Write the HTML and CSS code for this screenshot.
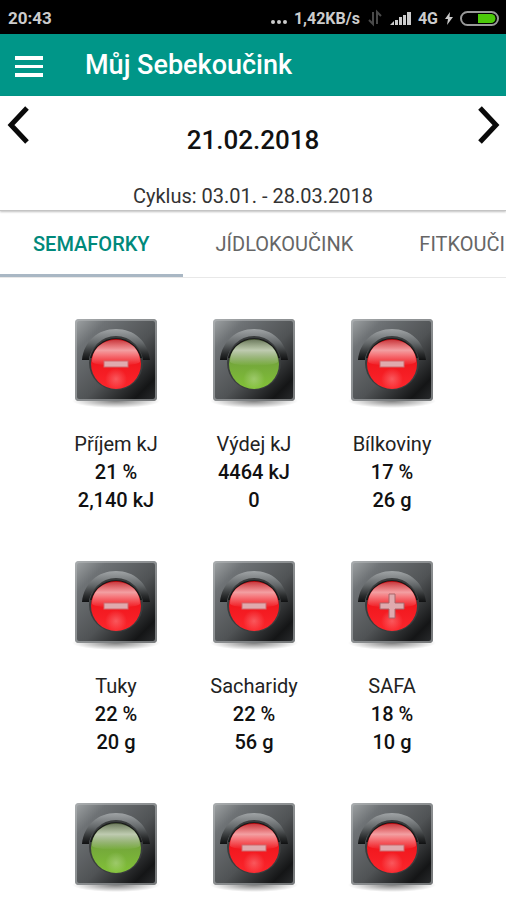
FILE: index.html
```
<!DOCTYPE html>
<html lang="cs">
<head>
  <meta charset="UTF-8">
  <meta name="viewport" content="width=device-width, initial-scale=1.0">
  <title>Můj Sebekoučink</title>
  <link rel="stylesheet" href="styles.css">
</head>
<body>
  <!-- shared lamp drawings -->
  <svg class="defs" width="0" height="0" aria-hidden="true">
    <defs>
      <linearGradient id="plate" x1="0" y1="0" x2="1" y2="1">
        <stop offset="0" stop-color="#a0a4a6"/>
        <stop offset="0.2" stop-color="#6e7275"/>
        <stop offset="0.55" stop-color="#505355"/>
        <stop offset="0.85" stop-color="#141516"/>
        <stop offset="1" stop-color="#2c2e30"/>
      </linearGradient>
      <linearGradient id="hood" x1="0" y1="0" x2="0" y2="1">
        <stop offset="0" stop-color="#a0a4a6"/>
        <stop offset="0.45" stop-color="#65696b"/>
        <stop offset="0.8" stop-color="#2a2c2d"/>
        <stop offset="1" stop-color="#101112"/>
      </linearGradient>
      <linearGradient id="red" x1="0" y1="0" x2="0" y2="1">
        <stop offset="0" stop-color="#b8090e"/>
        <stop offset="0.3" stop-color="#ee1219"/>
        <stop offset="1" stop-color="#fb262c"/>
      </linearGradient>
      <linearGradient id="green" x1="0" y1="0" x2="0" y2="1">
        <stop offset="0" stop-color="#4c5a3c"/>
        <stop offset="0.5" stop-color="#74a83a"/>
        <stop offset="1" stop-color="#82c138"/>
      </linearGradient>
      <linearGradient id="shine" x1="0" y1="0" x2="0" y2="1">
        <stop offset="0" stop-color="#fff" stop-opacity="0.2"/>
        <stop offset="0.4" stop-color="#fff" stop-opacity="0.6"/>
        <stop offset="1" stop-color="#fff" stop-opacity="0"/>
      </linearGradient>
      <radialGradient id="glow">
        <stop offset="0" stop-color="#fff" stop-opacity="0.25"/>
        <stop offset="1" stop-color="#fff" stop-opacity="0"/>
      </radialGradient>
      <radialGradient id="shadow">
        <stop offset="0" stop-color="#000" stop-opacity="0.5"/>
        <stop offset="1" stop-color="#000" stop-opacity="0"/>
      </radialGradient>
      <g id="housing">
        <ellipse cx="48" cy="89" rx="44" ry="7" fill="url(#shadow)"/>
        <rect x="7" y="7" width="82" height="82" rx="4" fill="url(#plate)"/>
        <rect x="8" y="8" width="80" height="80" rx="3" fill="none" stroke="#b0b4b6" stroke-width="2" stroke-opacity="0.6"/>
        <path d="M14 48C16 29 30 17 48 17S80 29 82 48H75C73 35 63 26 48 26S23 35 21 48Z" fill="url(#hood)"/>
        <circle cx="48" cy="51" r="27" fill="#3a3d3e"/>
        <path d="M22 46A27 27 0 0 1 74 46Z" fill="#161717"/>
      </g>
      <g id="gloss">
        <path d="M24 50C24 36 35 28 48 28S72 36 72 50C66 55 30 55 24 50Z" fill="url(#shine)"/>
        <circle cx="48" cy="67" r="11" fill="url(#glow)"/>
      </g>
      <symbol id="lamp-green" viewBox="0 0 96 96">
        <use href="#housing"/>
        <circle cx="48" cy="52" r="25" fill="url(#green)"/>
        <use href="#gloss"/>
      </symbol>
      <symbol id="lamp-minus" viewBox="0 0 96 96">
        <use href="#housing"/>
        <circle cx="48" cy="52" r="25" fill="url(#red)"/>
        <use href="#gloss"/>
        <rect x="36" y="49" width="24" height="6" fill="#dfaaae" stroke="#d0686d"/>
      </symbol>
      <symbol id="lamp-plus" viewBox="0 0 96 96">
        <use href="#housing"/>
        <circle cx="48" cy="52" r="25" fill="url(#red)"/>
        <use href="#gloss"/>
        <path d="M45 40H51V49H60V55H51V64H45V55H36V49H45Z" fill="#dfaaae" stroke="#a8666a"/>
      </symbol>
    </defs>
  </svg>

  <div class="status-bar">
    <span class="time">20:43</span>
    <div class="status-icons">
      <svg width="18" height="18" viewBox="0 0 18 18" fill="#ccc"><circle cx="3" cy="13" r="2"/><circle cx="9" cy="13" r="2"/><circle cx="15" cy="13" r="2"/></svg>
      <span>1,42KB/s</span>
      <svg class="transfer" width="14" height="18" viewBox="0 0 14 18" fill="none" stroke="#4a4a4a" stroke-width="2"><path d="M5 3V15L1 11M9 15V3L13 7"/></svg>
      <svg width="22" height="18" viewBox="0 0 22 18" fill="#ccc"><path d="M0 16L4 12V16ZM5 11H8V16H5ZM9 8H12V16H9ZM13 6H16V16H13ZM17 3H21V16H17Z"/></svg>
      <span>4G</span>
      <svg width="10" height="18" viewBox="0 0 10 18" fill="#ccc"><path d="M6 3L1 10H4L3 16L9 8H5.500Z"/></svg>
      <svg width="39" height="18" viewBox="0 0 39 18"><rect x="1" y="3" width="37" height="13" rx="6.500" fill="#000" stroke="#999" stroke-width="2"/><path d="M18 5H31A4.500 4.500 0 0 1 31 14H18Z" fill="#4cc90a"/></svg>
    </div>
  </div>

  <header class="toolbar">
    <button class="menu-button" aria-label="Menu">
      <svg width="28" height="22" viewBox="0 0 28 22" fill="#fff"><path d="M0 0H28V4H0ZM0 9H28V12H0ZM0 17H28V21H0Z"/></svg>
    </button>
    <h1>Můj Sebekoučink</h1>
  </header>

  <section class="date-panel">
    <div class="date-row">
      <button aria-label="Předchozí den">
        <svg width="24" height="40" viewBox="0 0 24 40" fill="none" stroke="#0a0a0a" stroke-width="5"><path d="M22 3L6 20L22 37"/></svg>
      </button>
      <h2>21.02.2018</h2>
      <button aria-label="Následující den">
        <svg width="24" height="40" viewBox="0 0 24 40" fill="none" stroke="#0a0a0a" stroke-width="5"><path d="M3 3L19 20L3 37"/></svg>
      </button>
    </div>
    <p class="cycle">Cyklus: 03.01. - 28.03.2018</p>
  </section>

  <nav class="tabs">
    <a href="#semaforky" class="tab active">SEMAFORKY</a>
    <a href="#jidlokoucink" class="tab">JÍDLOKOUČINK</a>
    <a href="#fitkoucink" class="tab">FITKOUČINK</a>
  </nav>

  <main class="lights">
    <div class="light">
      <svg class="lamp"><use href="#lamp-minus"/></svg>
      <p>Příjem kJ</p>
      <strong>21 %</strong>
      <strong>2,140 kJ</strong>
    </div>
    <div class="light">
      <svg class="lamp"><use href="#lamp-green"/></svg>
      <p>Výdej kJ</p>
      <strong>4464 kJ</strong>
      <strong>0</strong>
    </div>
    <div class="light">
      <svg class="lamp"><use href="#lamp-minus"/></svg>
      <p>Bílkoviny</p>
      <strong>17 %</strong>
      <strong>26 g</strong>
    </div>
    <div class="light">
      <svg class="lamp"><use href="#lamp-minus"/></svg>
      <p>Tuky</p>
      <strong>22 %</strong>
      <strong>20 g</strong>
    </div>
    <div class="light">
      <svg class="lamp"><use href="#lamp-minus"/></svg>
      <p>Sacharidy</p>
      <strong>22 %</strong>
      <strong>56 g</strong>
    </div>
    <div class="light">
      <svg class="lamp"><use href="#lamp-plus"/></svg>
      <p>SAFA</p>
      <strong>18 %</strong>
      <strong>10 g</strong>
    </div>
    <div class="light">
      <svg class="lamp"><use href="#lamp-green"/></svg>
    </div>
    <div class="light">
      <svg class="lamp"><use href="#lamp-minus"/></svg>
    </div>
    <div class="light">
      <svg class="lamp"><use href="#lamp-minus"/></svg>
    </div>
  </main>
</body>
</html>
```
FILE: styles.css
```
:root {
  --primary-color: #009688;
  --text-color: #111;
  --muted-color: #666;
}

* {
  box-sizing: border-box;
}

body {
  margin: 0;
  height: 100vh;
  display: flex;
  flex-direction: column;
  overflow: hidden;
  font-family: Roboto, 'Liberation Sans', sans-serif;
  color: var(--text-color);
  background-color: #fff;
}

h1, h2, p {
  margin: 0;
  font-weight: 500;
}

button {
  padding: 0;
  border: none;
  background: none;
  cursor: pointer;
}

svg {
  display: block;
}

.defs {
  position: absolute;
}

.status-bar {
  display: flex;
  flex-shrink: 0;
  justify-content: space-between;
  align-items: center;
  height: 34px;
  padding: 2px 7px 0 8px;
  background-color: #000;
  color: #ccc;
  font-size: 16px;
  font-weight: 700;
}

.time {
  font-size: 17px;
}

.status-icons {
  display: flex;
  align-items: center;
  gap: 6px;
}

.transfer {
  margin: 0 2px;
}

.toolbar {
  display: flex;
  flex-shrink: 0;
  align-items: center;
  gap: 42px;
  height: 62px;
  padding: 0 15px;
  background-color: var(--primary-color);
  color: #fff;
}

.toolbar h1 {
  font-size: 27px;
  line-height: 32px;
}

.menu-button {
  padding-top: 4px;
}

.date-panel {
  flex-shrink: 0;
  border-bottom: 1px solid #c4c4c4;
  box-shadow: 0 1px 2px rgba(0, 0, 0, 0.25);
}

.date-row {
  display: flex;
  justify-content: space-between;
  align-items: flex-start;
  height: 86px;
  padding: 9px 5px 0;
}

.date-row h2 {
  padding-top: 19px;
  font-size: 26px;
  line-height: 32px;
}

.cycle {
  font-size: 20px;
  font-weight: 400;
  line-height: 28px;
  text-align: center;
  color: #333;
}

.tabs {
  display: flex;
  flex-shrink: 0;
  height: 67px;
  border-bottom: 1px solid #e8e8e8;
  overflow-x: auto;
  scrollbar-width: none;
}

.tab {
  flex-shrink: 0;
  padding: 20px 33px 0;
  font-size: 20px;
  font-weight: 400;
  line-height: 26px;
  color: var(--muted-color);
  text-decoration: none;
}

.tab.active {
  font-weight: 500;
  color: #00897b;
  border-bottom: 3px solid #a9b7c4;
}

.lights {
  display: grid;
  grid-template-columns: repeat(3, 1fr);
  row-gap: 40px;
  padding: 34px 45px 0 47px;
}

.light {
  display: flex;
  flex-direction: column;
  align-items: center;
  font-size: 20px;
  line-height: 28px;
}

.lamp {
  width: 96px;
  height: 96px;
  margin-bottom: 22px;
}

.light p {
  font-weight: 400;
  color: #222;
}

.light strong {
  font-weight: 500;
}
```
